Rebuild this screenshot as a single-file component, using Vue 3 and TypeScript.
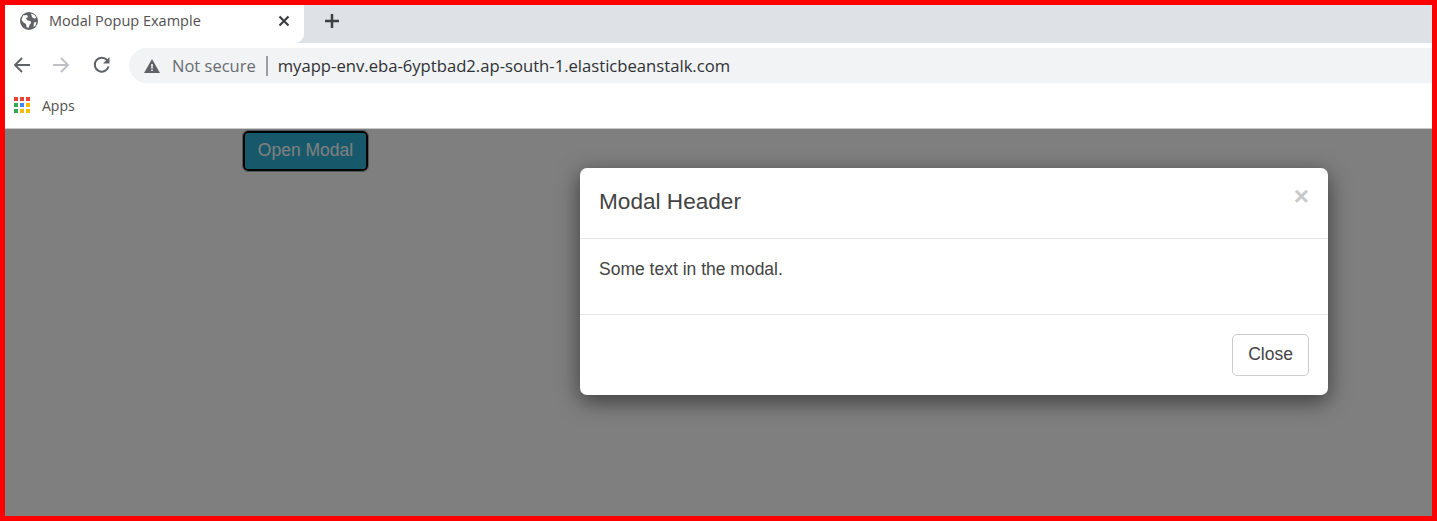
<script setup lang="ts">
const appDots: string[] = [
  '#ea4335', '#ea4335', '#ea4335',
  '#34a853', '#4285f4', '#fbbc04',
  '#34a853', '#fbbc04', '#fbbc04',
]
</script>

<template>
  <div class="frame">
    <div class="tabstrip">
      <div class="tab">
        <svg class="globe" viewBox="0 0 18 18" width="18" height="18">
          <circle cx="9" cy="9" r="9" fill="#5f6368" />
          <path d="M3 3.500 7 3l1 2-2 1.500 1.500 2 3 .5.500 2-1.500 2-1 3-2-1-.5-3-2.500-1.500-2-2.500z" fill="#fff" />
          <path d="M11 1.500l3.500 1.500 2 3-2.500.5-2-1.500zM14 10.500l2.500-.5-1 3.500-2 1.500z" fill="#fff" />
        </svg>
        <span class="tab-title">Modal Popup Example</span>
        <svg class="tab-close" viewBox="0 0 12 12" width="12" height="12">
          <path d="M1.500 1.500l9 9M10.500 1.500l-9 9" stroke="#3c4043" stroke-width="2.200" fill="none" />
        </svg>
      </div>
      <svg class="new-tab" viewBox="0 0 16 16" width="16" height="16">
        <path d="M8 1v14M1 8h14" stroke="#3c4043" stroke-width="2.500" fill="none" />
      </svg>
    </div>

    <div class="toolbar">
      <svg class="nav back" viewBox="0 0 18 18" width="18" height="18">
        <path d="M17 9H2M9 2 2 9l7 7" stroke="#5f6368" stroke-width="1.900" fill="none" />
      </svg>
      <svg class="nav forward" viewBox="0 0 18 18" width="18" height="18">
        <path d="M1 9h15M9 2l7 7-7 7" stroke="#bdc1c6" stroke-width="1.900" fill="none" />
      </svg>
      <svg class="nav reload" viewBox="0 0 18 18" width="18" height="18">
        <path d="M15.500 10.500A7 7 0 1 1 14 4" stroke="#5f6368" stroke-width="2" fill="none" />
        <path d="M16.500 1v6.500H10z" fill="#5f6368" />
      </svg>
      <div class="omnibox">
        <svg class="warn" viewBox="0 0 16 14" width="16" height="14">
          <path fill-rule="evenodd" d="M8 0l8 14H0zM7.200 5v4.500h1.600V5zM7.200 10.500v1.600h1.600v-1.600z" fill="#5f6368" />
        </svg>
        <span class="not-secure">Not secure</span>
        <span class="sep"></span>
        <span class="url">myapp-env.eba-6yptbad2.ap-south-1.elasticbeanstalk.com</span>
      </div>
    </div>

    <div class="bookmarks">
      <div class="apps-grid">
        <i v-for="(c, i) in appDots" :key="i" :style="{ background: c }"></i>
      </div>
      <span class="apps-label">Apps</span>
    </div>

    <div class="page">
      <button class="open-btn" type="button">Open Modal</button>

      <div class="backdrop">
        <div class="modal">
          <div class="modal-header">
            <h4 class="modal-title">Modal Header</h4>
            <span class="close-x">×</span>
          </div>
          <div class="modal-body">
            <p>Some text in the modal.</p>
          </div>
          <div class="modal-footer">
            <button class="close-btn" type="button">Close</button>
          </div>
        </div>
      </div>
    </div>
  </div>
</template>

<style>
html, body { margin: 0; padding: 0; overflow: hidden; }
</style>

<style scoped>
.frame {
  width: 1437px;
  height: 521px;
  box-sizing: border-box;
  border: 5px solid #ff0000;
  display: flex;
  flex-direction: column;
  background: #fff;
  overflow: hidden;
}
.tabstrip {
  height: 38px;
  flex: none;
  background: #dee1e6;
  display: flex;
  align-items: center;
}
.tab {
  width: 299px;
  height: 38px;
  box-sizing: border-box;
  background: #fff;
  border-bottom-right-radius: 9px;
  display: flex;
  align-items: center;
  padding: 0 14px 7px 15px;
}
.globe { flex: none; }
.tab-title {
  margin-left: 11px;
  flex: 1;
  font: 14.500px "Open Sans", "Noto Sans", sans-serif;
  color: #505050;
  white-space: nowrap;
}
.tab-close { flex: none; margin-top: 1px; }
.new-tab { margin-left: 20px; margin-top: -6px; }
.toolbar {
  height: 45px;
  flex: none;
  background: #fff;
  display: flex;
  align-items: center;
  box-sizing: border-box;
}
.nav { flex: none; margin-top: -1px; }
.back { margin-left: 8px; }
.forward { margin-left: 21px; }
.reload { margin-left: 23px; }
.omnibox {
  margin-left: 18px;
  flex: 1;
  height: 35px;
  background: #f1f3f4;
  border-radius: 17.500px 0 0 17.500px;
  display: flex;
  align-items: center;
  padding-left: 15px;
}
.warn { flex: none; }
.not-secure {
  margin-left: 12px;
  font: 16.500px "Open Sans", "Noto Sans", sans-serif;
  color: #696d72;
}
.sep {
  width: 2px;
  height: 20px;
  background: #9a9ea3;
  margin: 0 10px;
}
.url {
  font: 16.650px "Open Sans", "Noto Sans", sans-serif;
  color: #303134;
  white-space: nowrap;
}
.bookmarks {
  height: 41px;
  flex: none;
  background: #fff;
  display: flex;
  align-items: flex-start;
  padding-left: 9px;
  border-bottom: 1px solid #c8c8c8;
  box-sizing: border-box;
}
.apps-grid {
  margin-top: 9px;
  display: grid;
  grid-template-columns: repeat(3, 4px);
  grid-auto-rows: 4px;
  gap: 2px;
  width: 18px;
}
.apps-grid i { display: block; }
.apps-label {
  margin-top: 8px;
  margin-left: 10px;
  font: 14px "Open Sans", "Noto Sans", sans-serif;
  color: #505050;
}
.page {
  position: relative;
  flex: 1;
  background: #fff;
  display: flex;
  align-items: flex-start;
}
.open-btn {
  margin: 2px 0 0 238px;
  width: 125px;
  height: 40px;
  box-sizing: border-box;
  background: #2eb3d6;
  color: #fff;
  border: 2px solid #000;
  outline: 1px solid #aaa;
  border-radius: 5px;
  font: 17.500px "Liberation Sans", Arial, sans-serif;
  padding: 0 0 2px;
}
.backdrop {
  position: absolute;
  inset: 0;
  background: rgba(0, 0, 0, 0.5);
  padding: 39px 0 0 575px;
  box-sizing: border-box;
}
.modal {
  width: 748px;
  background: #fff;
  border-radius: 7px;
  box-shadow: 0 6px 22px rgba(0, 0, 0, 0.55);
  color: #444;
  font-family: "Liberation Sans", Arial, sans-serif;
}
.modal-header {
  height: 71px;
  box-sizing: border-box;
  border-bottom: 1px solid #e5e5e5;
  padding: 0 19px;
  display: flex;
  justify-content: space-between;
}
.modal-title {
  margin: 19px 0 0;
  font-size: 22.600px;
  font-weight: 400;
  line-height: 30px;
}
.close-x {
  font-size: 26px;
  font-weight: 700;
  line-height: 26px;
  margin-top: 15px;
  color: #c9c9c9;
}
.modal-body {
  height: 76px;
  box-sizing: border-box;
  border-bottom: 1px solid #e5e5e5;
  padding: 0 19px;
}
.modal-body p {
  margin: 0;
  padding-top: 19px;
  font-size: 17.500px;
  line-height: 23px;
}
.modal-footer {
  height: 80px;
  box-sizing: border-box;
  padding: 19px 19px 0;
  display: flex;
  justify-content: flex-end;
  align-items: flex-start;
}
.close-btn {
  width: 77px;
  height: 42px;
  box-sizing: border-box;
  background: #fff;
  border: 1px solid #ccc;
  border-radius: 5px;
  color: #444;
  font: 17.500px/38px "Liberation Sans", Arial, sans-serif;
  padding: 0 0 2px;
}
</style>
